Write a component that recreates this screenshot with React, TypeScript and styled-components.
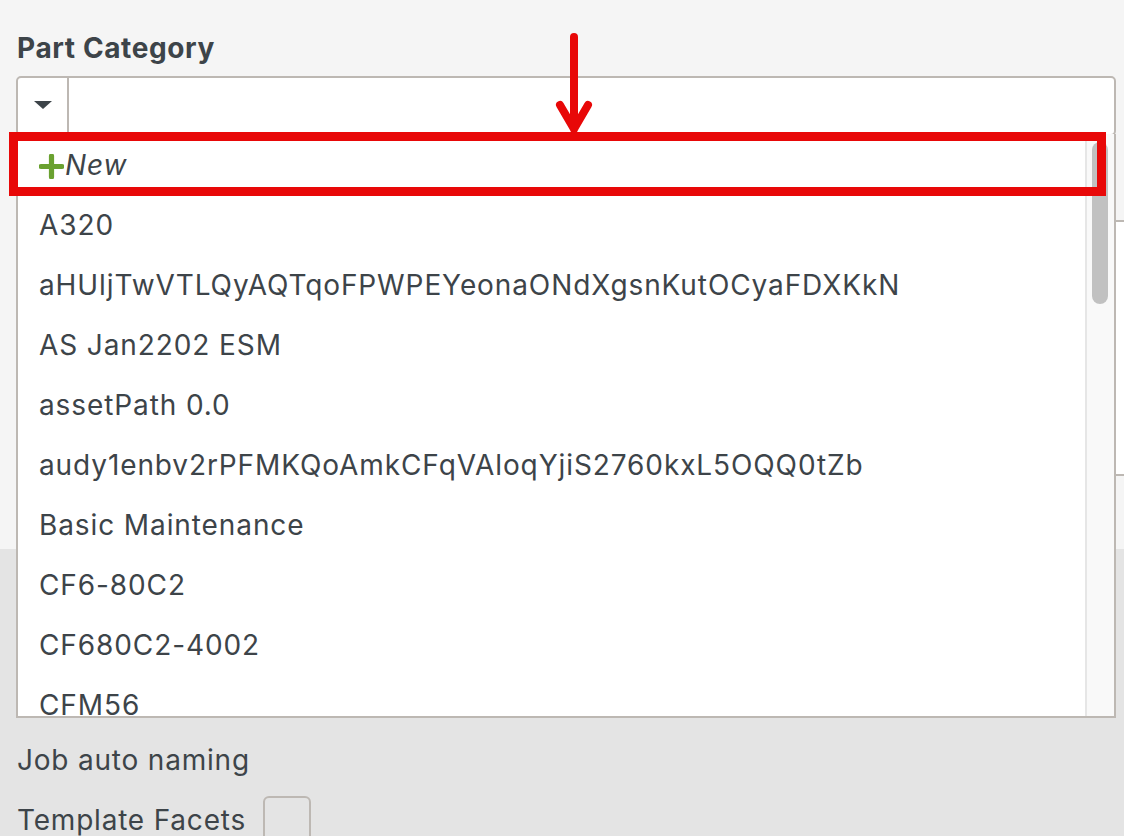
import styled, { createGlobalStyle } from 'styled-components';

const GlobalStyle = createGlobalStyle`
  body {
    margin: 0;
    background: #e4e4e4;
    font-family: Inter, "Open Sans", sans-serif;
    color: #3d4449;
  }
`;

const Page = styled.div`
  position: relative;
  width: 1124px;
  height: 836px;
  overflow: hidden;
`;

const FormPanel = styled.section`
  height: 549px;
  box-sizing: border-box;
  padding: 32px 0 0 16px;
  background: #f5f5f5;
`;

const FieldLabel = styled.label`
  display: block;
  margin: 0 0 12px 1px;
  font-size: 28px;
  font-weight: 700;
  letter-spacing: 0.6px;
  line-height: 32px;
`;

const Combo = styled.div`
  display: flex;
  width: 1100px;
  height: 60px;
  box-sizing: border-box;
  border: 2px solid #bdb8b3;
  border-radius: 5px;
  background: #fff;
`;

const ComboToggle = styled.button`
  display: flex;
  align-items: center;
  justify-content: center;
  width: 51px;
  padding: 0 0 2px;
  border: none;
  border-right: 2px solid #bdb8b3;
  background: transparent;
`;

const Caret = styled.span`
  width: 0;
  height: 0;
  border-left: 9px solid transparent;
  border-right: 9px solid transparent;
  border-top: 8px solid #3d4449;
`;

const ComboInput = styled.input`
  flex: 1;
  min-width: 0;
  border: none;
  outline: none;
  background: transparent;
`;

const NotesBox = styled.div`
  height: 252px;
  margin-top: 84px;
  border-top: 2px solid #bdb8b3;
  border-bottom: 2px solid #bdb8b3;
  background: #fff;
`;

const OptionsPanel = styled.section`
  display: flex;
  flex-direction: column;
  gap: 19px;
  padding: 194px 0 0 17px;
  font-size: 28px;
  letter-spacing: 0.8px;
`;

const OptionRow = styled.div`
  display: flex;
  align-items: center;
  gap: 17px;
  min-height: 34px;
`;

const Checkbox = styled.span`
  width: 44px;
  height: 44px;
  border: 2px solid #bdb8b3;
  border-radius: 6px;
`;

/* dropdown menu hanging under the combo */
const Menu = styled.div`
  position: absolute;
  left: 16px;
  top: 134px;
  width: 1100px;
  height: 584px;
  box-sizing: border-box;
  border: 2px solid #bdb8b3;
  border-top: none;
  background: #fff;
  overflow: hidden;
  display: flex;
`;

const MenuItems = styled.ul`
  flex: 1;
  margin: 0;
  padding: 1px 0 0;
  list-style: none;
`;

const MenuItem = styled.li<{ $italic?: boolean }>`
  display: flex;
  align-items: center;
  height: 60px;
  padding-left: 21px;
  font-size: 28px;
  letter-spacing: 0.9px;
  font-style: ${p => (p.$italic ? 'italic' : 'normal')};
  white-space: nowrap;
`;

const PlusIcon = styled.svg`
  width: 25px;
  height: 25px;
  margin: 2px 1px 0 0;
`;

const Track = styled.div`
  position: relative;
  width: 27px;
  border-left: 2px solid #e6e6e6;
  background: #f9f9f9;
`;

const Thumb = styled.div`
  position: absolute;
  left: 5px;
  top: 8px;
  width: 16px;
  height: 162px;
  border-radius: 8px;
  background: #c1c1c1;
`;

/* red callout drawn over the form */
const CalloutBox = styled.div`
  position: absolute;
  left: 9px;
  top: 132px;
  width: 1097px;
  height: 64px;
  box-sizing: border-box;
  border: 9px solid #e80808;
`;

const CalloutArrow = styled.svg`
  position: absolute;
  left: 554px;
  top: 32px;
  width: 40px;
  height: 104px;
`;

const items = [
  'A320',
  'aHUljTwVTLQyAQTqoFPWPEYeonaONdXgsnKutOCyaFDXKkN',
  'AS Jan2202 ESM',
  'assetPath 0.0',
  'audy1enbv2rPFMKQoAmkCFqVAloqYjiS2760kxL5OQQ0tZb',
  'Basic Maintenance',
  'CF6-80C2',
  'CF680C2-4002',
  'CFM56',
];

export default function App() {
  return (
    <Page>
      <GlobalStyle />
      <FormPanel>
        <FieldLabel>Part Category</FieldLabel>
        <Combo>
          <ComboToggle>
            <Caret />
          </ComboToggle>
          <ComboInput />
        </Combo>
        <NotesBox />
      </FormPanel>
      <OptionsPanel>
        <OptionRow>Job auto naming</OptionRow>
        <OptionRow>
          Template Facets
          <Checkbox />
        </OptionRow>
      </OptionsPanel>

      <Menu>
        <MenuItems>
          <MenuItem $italic>
            <PlusIcon viewBox="0 0 24 24">
              <path d="M12 2v20M2 12h20" stroke="#6aa130" strokeWidth="5" strokeLinecap="round" />
            </PlusIcon>
            New
          </MenuItem>
          {items.map(name => (
            <MenuItem key={name}>{name}</MenuItem>
          ))}
        </MenuItems>
        <Track>
          <Thumb />
        </Track>
      </Menu>

      <CalloutBox />
      <CalloutArrow viewBox="0 0 40 104">
        <path
          d="M20 5v92M6 73l14 24 14-24"
          fill="none"
          stroke="#e80808"
          strokeWidth="8"
          strokeLinecap="round"
          strokeLinejoin="round"
        />
      </CalloutArrow>
    </Page>
  );
}
